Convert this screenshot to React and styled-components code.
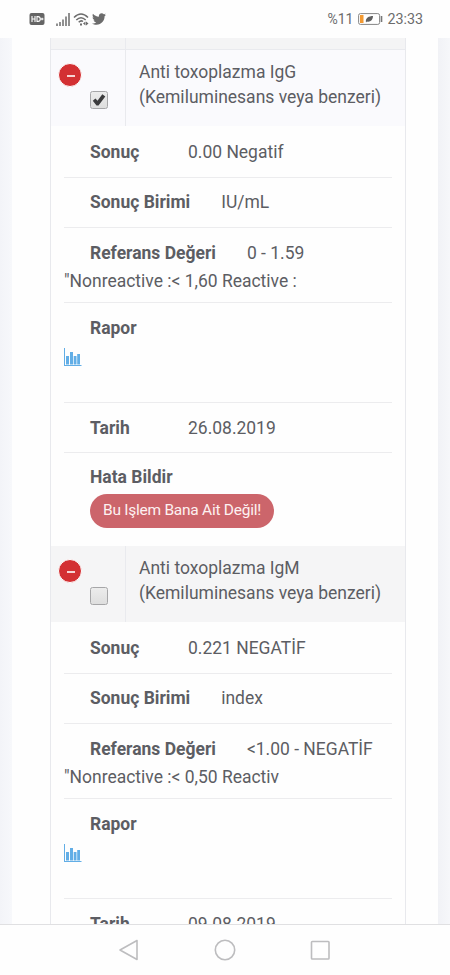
import React from 'react';
import styled, { createGlobalStyle } from 'styled-components';
import { FaTwitter } from 'react-icons/fa';

const GlobalStyle = createGlobalStyle`
    * {
        box-sizing: border-box;
    }
    body {
        margin: 0;
        background: #fefefe;
        font-family: Roboto, sans-serif;
    }
`
const Screen = styled.div`
    width: 450px;
    height: 975px;
    display: flex;
    flex-direction: column;
    overflow: hidden;
    color: #5c5d63;
`
const StatusBar = styled.header`
    height: 38px;
    flex: none;
    display: flex;
    align-items: center;
    padding: 0 27px 0 29px;
    color: #6c6c6c;
    font-size: 14.3px;
`
const StatusIcon = styled.svg`
    display: block;
    flex: none;
    margin-left: ${props => props.$gap || 0}px;
`
const Bird = styled(FaTwitter)`
    margin-left: 2px;
    font-size: 14px;
`
const Percent = styled.span`
    margin-left: auto;
    font-size: 14px;
`
const Clock = styled.span`
    margin-left: 4px;
`
const Page = styled.main`
    flex: 1;
    min-height: 0;
    overflow: hidden;
    padding: 0 12px;
    background: linear-gradient(90deg, #f3f4f8 0, #f7f8fb 12px, #f1f2f6 438px, #f6f7fa 450px);
`
const Panel = styled.div`
    height: 100%;
    padding: 0 32px 0 38px;
    background: #fefefe;
`
const Table = styled.div`
    width: 356px;
    border: solid #e8e9ed;
    border-width: 0 1px;
`
const TableHead = styled.div`
    height: 12px;
    display: flex;
    background: #f4f4f5;
    border-bottom: 1px solid #e9eaee;
`
const HeadCell = styled.div`
    width: 75px;
    border-right: 1px solid #e9eaee;
`
const TestRow = styled.div`
    height: ${props => props.$height}px;
    display: flex;
    background: ${props => props.$selected ? '#fafafd' : '#f5f5f6'};
`
const SelectCell = styled.div`
    width: 75px;
    flex: none;
    display: flex;
    align-items: flex-start;
    padding: 13px 0 0 7px;
    border-right: 1px solid #e9eaee;
`
const Collapse = styled.button`
    width: 24px;
    height: 24px;
    flex: none;
    display: flex;
    align-items: center;
    justify-content: center;
    padding: 2px 0 0 1px;
    border: 1px solid #fff;
    border-radius: 50%;
    background: #d33033;
`
const Minus = styled.span`
    width: 8px;
    height: 2px;
    background: #f6d3d3;
`
const Check = styled.div`
    width: 18px;
    height: 18px;
    margin: 28px 0 0 8px;
    border: 1px solid #a6a6a8;
    border-radius: 2.5px;
    background: linear-gradient(#ececec, #dedede);
`
const TestName = styled.div`
    padding: 10px 0 0 13px;
    font-size: 17.5px;
    line-height: 24.8px;
    white-space: nowrap;
`
const Details = styled.div`
    padding: 0 13px;
    background: #fefefe;
`
const Detail = styled.div`
    height: ${props => props.$height}px;
    padding-top: ${props => props.$top || 11}px;
    border-bottom: ${props => props.$last ? 0 : 1}px solid #ececee;
    font-size: 17.48px;
    line-height: 28px;
    white-space: nowrap;
`
const Line = styled.div`
    display: flex;
    padding-left: 26px;
`
const Label = styled.b`
    min-width: 67px;
    margin-right: 31px;
    font-weight: 700;
`
const ReportIcon = styled.svg`
    display: block;
    margin: 6px 0 0 0;
`
const ReportButton = styled.button`
    display: block;
    width: 184px;
    height: 34px;
    margin: 3px 0 0 26px;
    padding: 0 0 1px;
    border: 0;
    border-radius: 17px;
    background: #cc656b;
    color: #fdf1f1;
    font: 15.5px/33px Roboto, sans-serif;
    letter-spacing: -0.26px;
    white-space: nowrap;
`
const NavBar = styled.nav`
    height: 51px;
    flex: none;
    display: flex;
    align-items: center;
    justify-content: space-between;
    padding: 0 119px 0 118px;
    border-top: 1px solid #e0e0e2;
    background: #fefefe;
`
const NavIcon = styled.svg`
    display: block;
    fill: none;
    stroke: #bdbdbf;
    stroke-width: 1.6;
    stroke-linejoin: round;
`

const tests = [
    {
        name: 'Anti toxoplazma IgG',
        selected: true,
        height: 76,
        result: '0.00 Negatif',
        unit: 'IU/mL',
        reference: '0 - 1.59',
        note: '"Nonreactive :< 1,60 Reactive :',
        date: '26.08.2019',
    },
    {
        name: 'Anti toxoplazma IgM',
        selected: false,
        height: 76,
        result: '0.221 NEGATİF',
        unit: 'index',
        reference: '<1.00 - NEGATİF',
        note: '"Nonreactive :< 0,50 Reactiv',
        date: '09.08.2019',
    },
]

const Field = ({ label, value }) => (
    <Line>
        <Label>{label}</Label>
        <span>{value}</span>
    </Line>
)

const Test = ({ test }) => {
    return (
        <section>
            <TestRow $selected={test.selected} $height={test.height}>
                <SelectCell>
                    <Collapse aria-label="-"><Minus /></Collapse>
                    <Check role="checkbox" aria-checked={test.selected}>
                        {test.selected &&
                            <StatusIcon width="16" height="16" viewBox="0 0 16 16">
                                <path d="M1.800 8.800 L4.500 6.500 L6.500 8.700 L11.300 2.200 L14.300 4.400 L7.500 13.600 L5.500 13.600 Z" fill="#3b3b3d" />
                            </StatusIcon>
                        }
                    </Check>
                </SelectCell>
                <TestName>{test.name}<br />(Kemiluminesans veya benzeri)</TestName>
            </TestRow>
            <Details>
                <Detail $height={52} $top={12}>
                    <Field label="Sonuç" value={test.result} />
                </Detail>
                <Detail $height={50} $top={10}>
                    <Field label="Sonuç Birimi" value={test.unit} />
                </Detail>
                <Detail $height={75}>
                    <Field label="Referans Değeri" value={test.reference} />
                    {test.note}
                </Detail>
                <Detail $height={100}>
                    <Field label="Rapor" />
                    <ReportIcon width="18" height="18" viewBox="0 0 18 18" fill="#62aee6">
                        <path d="M0 0h1v17h16.500v1H0z" />
                        <path d="M2 8h3v8.500H2z M6 4h3v12.500H6z M9.700 8h2.800v8.500H9.700z M13.200 6h2.800v10.500h-2.800z" />
                    </ReportIcon>
                </Detail>
                <Detail $height={50}>
                    <Field label="Tarih" value={test.date} />
                </Detail>
                <Detail $height={93} $top={10} $last>
                    <Field label="Hata Bildir" />
                    <ReportButton>Bu Işlem Bana Ait Değil!</ReportButton>
                </Detail>
            </Details>
        </section>
    )
}

const App = () => {
    return (
        <Screen>
            <GlobalStyle />
            <StatusBar>
                <StatusIcon width="16" height="12" viewBox="0 0 16 12">
                    <rect x="0.500" width="15" height="12" rx="2" fill="#656565" />
                    <path d="M3 3v6M6 3v6M3 6h3M8 3.600v4.800h1c3 0 3-4.800 0-4.800zM11.800 6h2.700M13.100 4.700v2.600" fill="none" stroke="#fff" strokeWidth="1.100" />
                </StatusIcon>
                <StatusIcon $gap={11} width="15" height="13" viewBox="0 0 15 13">
                    <path d="M1 10.500V13M4 9v4M7 6.500V13M10 3.500V13M13 0v13" stroke="#6c6c6c" strokeWidth="1.500" />
                </StatusIcon>
                <StatusIcon $gap={2} width="17" height="14" viewBox="0 0 17 14">
                    <path d="M1 5.500Q8 -1.500 15 5.500M3.300 8Q8 3.300 12.700 8M5.700 10.200Q8 8 10 9.500" fill="none" stroke="#6c6c6c" strokeWidth="1.500" />
                    <path d="M7 11.500h2v2H7zM10 11.500l2.500-2v4zM13 9.500l2.500 2-2.500 2z" fill="#6c6c6c" />
                </StatusIcon>
                <Bird />
                <Percent>%11</Percent>
                <StatusIcon $gap={5} width="25" height="12" viewBox="0 0 25 12">
                    <rect x="0.600" y="0.600" width="21" height="10.800" rx="1.800" fill="#fff" stroke="#858585" />
                    <rect x="2" y="2" width="3.500" height="8" fill="#f39a32" />
                    <path d="M8 9.500C7 5 11 3 15 3C15 7 12 9.500 9 8.500z" fill="#606060" />
                    <path d="M23.500 3v6" stroke="#777" strokeWidth="1.600" />
                </StatusIcon>
                <Clock>23:33</Clock>
            </StatusBar>
            <Page>
                <Panel>
                    <Table>
                        <TableHead><HeadCell /></TableHead>
                        {tests.map(test => <Test key={test.name} test={test} />)}
                    </Table>
                </Panel>
            </Page>
            <NavBar>
                <NavIcon width="22" height="22" viewBox="0 0 22 22">
                    <path d="M2 11 L19 1.500 V20.500 Z" />
                </NavIcon>
                <NavIcon width="22" height="22" viewBox="0 0 22 22">
                    <circle cx="11" cy="11" r="9.700" />
                </NavIcon>
                <NavIcon width="22" height="22" viewBox="0 0 22 22">
                    <rect x="2.500" y="2.500" width="17.500" height="17.500" rx="0.800" />
                </NavIcon>
            </NavBar>
        </Screen>
    )
}

export default App;
